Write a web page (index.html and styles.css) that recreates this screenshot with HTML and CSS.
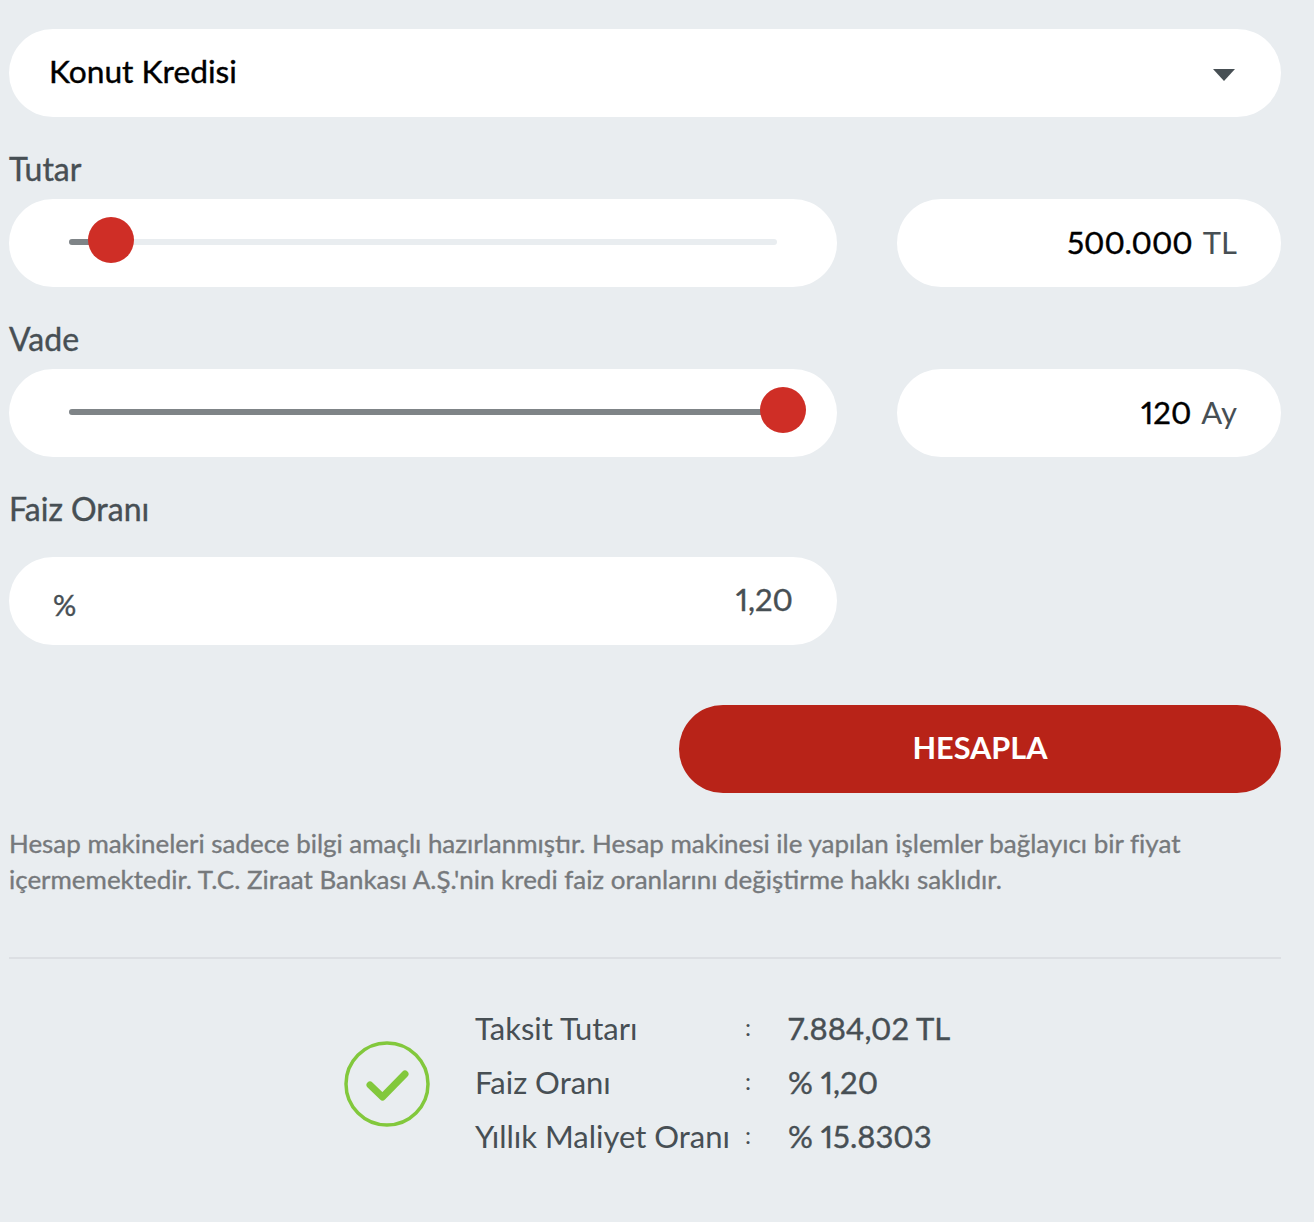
FILE: index.html
```html
<!DOCTYPE html>
<html lang="tr">
<head>
    <meta name="viewport" content="width=device-width, initial-scale=1">
    <title>Kredi Hesaplama</title>
    <link rel="stylesheet" href="styles.css">
</head>
<body>
    <div class="calculator">
        <div class="select-box">
            <span>Konut Kredisi</span>
            <span class="caret"></span>
        </div>

        <div class="field-label">Tutar</div>
        <div class="field-row">
            <div class="pill slider-pill">
                <div class="track">
                    <div class="track-fill fill-tutar"></div>
                    <div class="thumb thumb-tutar"></div>
                </div>
            </div>
            <div class="pill value-pill"><b>500.000</b> <span>TL</span></div>
        </div>

        <div class="field-label">Vade</div>
        <div class="field-row">
            <div class="pill slider-pill">
                <div class="track">
                    <div class="track-fill fill-vade"></div>
                    <div class="thumb thumb-vade"></div>
                </div>
            </div>
            <div class="pill value-pill"><b>120</b> <span>Ay</span></div>
        </div>

        <div class="field-label label-faiz">Faiz Oranı</div>
        <div class="field-row">
            <div class="pill rate-pill">
                <span class="percent">%</span>
                <span class="rate">1,20</span>
            </div>
        </div>

        <div class="actions">
            <button class="calc-button">HESAPLA</button>
        </div>

        <p class="disclaimer">Hesap makineleri sadece bilgi amaçlı hazırlanmıştır. Hesap makinesi ile yapılan işlemler bağlayıcı bir fiyat içermemektedir. T.C. Ziraat Bankası A.Ş.'nin kredi faiz oranlarını değiştirme hakkı saklıdır.</p>

        <div class="result">
            <svg class="check" width="86" height="86" viewBox="0 0 86 86">
                <circle cx="43" cy="43" r="41" fill="none" stroke="#82c83c" stroke-width="3.5"/>
                <path d="M26 44 L38.5 56 L61 33" fill="none" stroke="#82c83c" stroke-width="7" stroke-linecap="round" stroke-linejoin="round"/>
            </svg>
            <div class="result-table">
                <span class="result-name">Taksit Tutarı</span><span class="colon">:</span><span class="result-value">7.884,02 TL</span>
                <span class="result-name">Faiz Oranı</span><span class="colon">:</span><span class="result-value">% 1,20</span>
                <span class="result-name">Yıllık Maliyet Oranı</span><span class="colon">:</span><span class="result-value">% 15.8303</span>
            </div>
        </div>
    </div>
</body>
</html>
```

FILE: styles.css
```css
html {
    background-color: #e9edf0;
}

body {
    margin: 0;
    font-family: Lato, "Open Sans", sans-serif;
    font-variant-numeric: proportional-nums;
    color: #474f54;
}

.calculator {
    width: 1272px;
    margin-left: 9px;
    padding-top: 29px;
}

.select-box {
    display: flex;
    align-items: center;
    justify-content: space-between;
    height: 88px;
    box-sizing: border-box;
    padding: 0 46px 4px 40px;
    background-color: #fff;
    border-radius: 44px;
    color: #000;
    font-size: 31.7px;
    -webkit-text-stroke: 0.4px;
}

.caret {
    width: 0;
    height: 0;
    margin-top: 7px;
    border-left: 11px solid transparent;
    border-right: 11px solid transparent;
    border-top: 12px solid #474f54;
}

.field-label {
    height: 82px;
    box-sizing: border-box;
    padding-top: 33px;
    line-height: 38px;
    font-size: 32px;
    -webkit-text-stroke: 0.4px;
}

.label-faiz {
    height: 100px;
}

.field-row {
    display: grid;
    grid-template-columns: 828px 384px;
    column-gap: 60px;
}

.pill {
    height: 88px;
    box-sizing: border-box;
    background-color: #fff;
    border-radius: 44px;
}

.slider-pill {
    padding: 40px 60px 0;
}

.track {
    position: relative;
    height: 6px;
    background-color: #e9edf0;
    border-radius: 3px;
}

.track-fill {
    height: 6px;
    background-color: #7f8487;
    border-radius: 3px;
}

.fill-tutar {
    width: 42px;
}

.fill-vade {
    width: 100%;
}

.thumb {
    position: absolute;
    top: -22px;
    width: 46px;
    height: 46px;
    background-color: #cf2e26;
    border-radius: 50%;
}

.thumb-tutar {
    left: 19px;
}

.thumb-vade {
    right: -29px;
}

.value-pill {
    display: flex;
    align-items: center;
    justify-content: flex-end;
    gap: 10px;
    padding: 0 44px 2px 0;
    font-size: 31px;
}

.value-pill b {
    color: #000;
    font-weight: 400;
    -webkit-text-stroke: 0.4px;
}

.rate-pill {
    display: flex;
    align-items: center;
    justify-content: space-between;
    padding: 0 44px;
    font-size: 31px;
    -webkit-text-stroke: 0.4px;
}

.percent {
    margin-top: 6px;
    font-size: 29px;
}

.rate {
    margin-top: -4px;
}

.actions {
    display: flex;
    justify-content: flex-end;
    margin-top: 60px;
}

.calc-button {
    width: 602px;
    height: 88px;
    padding: 0 0 4px;
    border: 0;
    border-radius: 44px;
    background-color: #b82318;
    color: #fff;
    font-family: inherit;
    font-size: 30.7px;
    font-weight: 700;
}

.disclaimer {
    margin: 32px 0 0;
    padding-bottom: 60px;
    border-bottom: 2px solid #dcdfe3;
    color: #76797c;
    font-size: 25.95px;
    line-height: 36px;
    -webkit-text-stroke: 0.35px;
}

.result {
    display: flex;
    align-items: center;
    margin-top: 42px;
    padding-left: 335px;
}

.check {
    flex: none;
    margin: 4px 45px 0 0;
}

.result-table {
    display: grid;
    grid-template-columns: 268px 44px auto;
    grid-auto-rows: 54px;
    align-items: center;
    font-size: 31px;
}

.colon {
    margin-bottom: 4px;
    padding-left: 2px;
    font-size: 24px;
}

.result-value {
    padding-left: 1px;
    -webkit-text-stroke: 0.4px;
}
```
